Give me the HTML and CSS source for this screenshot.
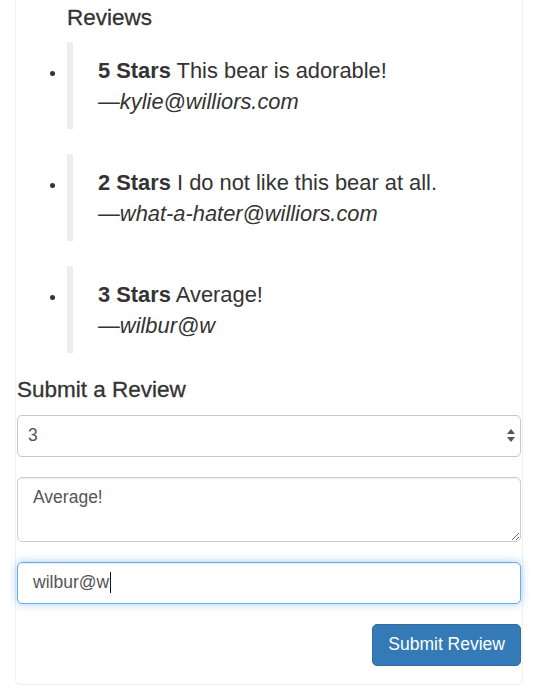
FILE: index.html
```html
<!DOCTYPE html>
<html lang="en">
<head>
<meta charset="utf-8">
<title>Reviews</title>
<link rel="stylesheet" href="styles.css">
</head>
<body>
<div class="panel">
  <h4 class="section-title reviews-title">Reviews</h4>
  <ul class="review-list">
    <li>
      <blockquote class="review"><strong>5 Stars</strong> This bear is adorable!<br><cite class="review-author">—kylie@williors.com</cite></blockquote>
    </li>
    <li>
      <blockquote class="review"><strong>2 Stars</strong> I do not like this bear at all.<br><cite class="review-author">—what-a-hater@williors.com</cite></blockquote>
    </li>
    <li>
      <blockquote class="review"><strong>3 Stars</strong> Average!<br><cite class="review-author">—wilbur@w</cite></blockquote>
    </li>
  </ul>
  <form class="review-form">
    <h4 class="section-title form-title">Submit a Review</h4>
    <div class="form-group select-wrap">
      <select class="form-control select-control">
        <option>1</option>
        <option>2</option>
        <option selected>3</option>
        <option>4</option>
        <option>5</option>
      </select>
      <svg class="select-arrows" width="8" height="13" viewBox="0 0 8 13" aria-hidden="true">
        <path d="M0 5 L4 0 L8 5 Z" fill="#555"/>
        <path d="M0 8 L8 8 L4 13 Z" fill="#555"/>
      </svg>
    </div>
    <div class="form-group">
      <textarea class="form-control textarea-control">Average!</textarea>
    </div>
    <div class="form-group">
      <div class="form-control input-focus" role="textbox">wilbur@w<span class="text-caret"></span></div>
    </div>
    <div class="form-actions">
      <button type="button" class="btn-primary">Submit Review</button>
    </div>
  </form>
</div>
</body>
</html>
```
FILE: styles.css
```css
* {
  box-sizing: border-box;
}

html, body {
  margin: 0;
  background: #fff;
}

body {
  font-family: "Liberation Sans", Arial, Helvetica, sans-serif;
  font-size: 17.5px;
  line-height: 25px;
  color: #333;
}

.panel {
  margin: 0 13px 0 15px;
  padding: 5px 1px 18.5px;
  border: 1px solid #f1f1f1;
  border-top: 0;
  border-radius: 0 0 5px 5px;
  box-shadow: 0 1px 1px rgba(0, 0, 0, 0.03);
}

.section-title {
  font-size: 22.5px;
  line-height: 25px;
  font-weight: 500;
  color: #333;
  -webkit-text-stroke: 0.3px #333;
  margin: 0;
}

.reviews-title {
  margin: 0 0 12px 50px;
}

.review-list {
  margin: 0;
  padding-left: 50px;
}

.review {
  margin: 0 0 25px;
  padding: 12.5px 25px;
  border-left: 6px solid #eee;
  font-size: 21.875px;
  line-height: 31px;
}

.review-list li:last-child .review {
  margin-bottom: 0;
}

.review strong {
  font-weight: bold;
}

.review-author {
  font-style: italic;
}

.review-form {
  margin: 0;
}

.form-title {
  margin: 23.5px 0 13px;
}

.form-group {
  margin-bottom: 20px;
}

.select-wrap {
  position: relative;
}

.form-control {
  display: block;
  width: 100%;
  height: 42px;
  padding: 7.5px 15px;
  font-family: "Liberation Sans", Arial, Helvetica, sans-serif;
  font-size: 17.5px;
  line-height: 25px;
  color: #555;
  background: #fff;
  border: 1px solid #ccc;
  border-radius: 5px;
  box-shadow: inset 0 1px 1px rgba(0, 0, 0, 0.075);
  margin: 0;
}

.select-control {
  -webkit-appearance: none;
  appearance: none;
  padding-left: 10px;
  box-shadow: none;
  border-color: #c8c8c8;
}

.select-arrows {
  position: absolute;
  right: 6px;
  top: 14.5px;
  pointer-events: none;
}

.textarea-control {
  height: 65px;
  resize: vertical;
}

.input-focus {
  border-color: #66afe9;
  box-shadow: inset 0 1px 1px rgba(0, 0, 0, 0.075), 0 0 10px rgba(102, 175, 233, 0.6);
  white-space: nowrap;
}

.text-caret {
  display: inline-block;
  width: 1px;
  height: 21px;
  margin-left: 1px;
  background: #111;
  vertical-align: -5px;
}

.form-actions {
  display: flex;
  justify-content: flex-end;
}

.btn-primary {
  height: 42px;
  padding: 7.5px 15px;
  font-family: "Liberation Sans", Arial, Helvetica, sans-serif;
  font-size: 17.5px;
  line-height: 25px;
  font-weight: 400;
  color: #fff;
  background: #337ab7;
  border: 1px solid #2e6da4;
  border-radius: 5px;
  cursor: pointer;
}
```
